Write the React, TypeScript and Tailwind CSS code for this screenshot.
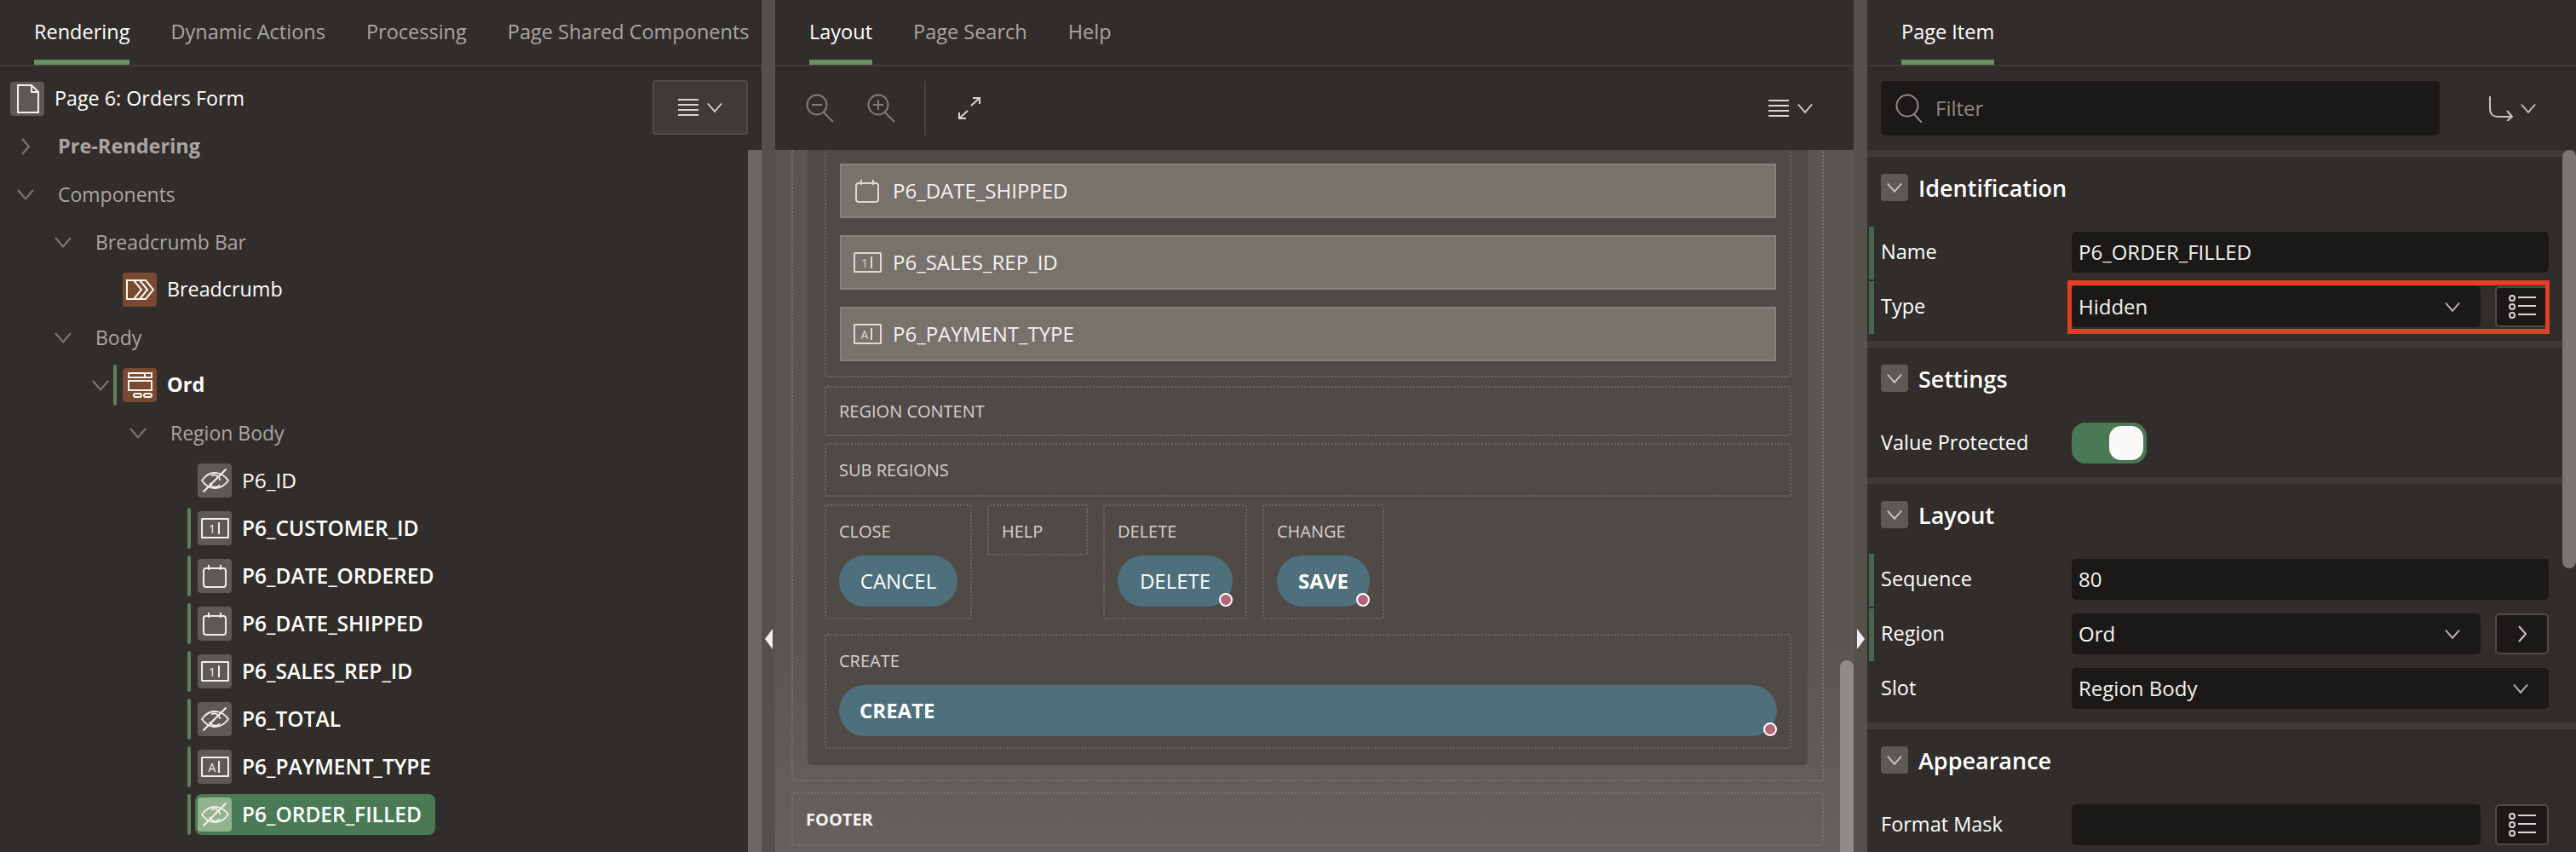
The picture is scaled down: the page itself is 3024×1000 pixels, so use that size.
import React from "react";

const font = { fontFamily: '"Open Sans", "Noto Sans", sans-serif' };

function Chevron({ dir = "down", className = "" }: { dir?: "down" | "right"; className?: string }) {
  return (
    <svg viewBox="0 0 20 20" className={className} fill="none" stroke="currentColor" strokeWidth="2">
      {dir === "down" ? <path d="M1 5 L10 15.5 L19 5" /> : <path d="M6 1 L14 10 L6 19" />}
    </svg>
  );
}

function EyeOff() {
  return (
    <svg viewBox="0 0 40 40" className="w-10 h-10" fill="none" stroke="currentColor" strokeWidth="1.8">
      <path d="M5 20 C10 13 16 11 20 11 C25 11 31 13 36 20 C31 27 25 29 20 29 C16 29 10 27 5 20 Z" />
      <path d="M26 20 a6.5 6.5 0 0 0 -10 -5.5 M14.5 23 a6.5 6.5 0 0 0 11.5 2" />
      <path d="M33.5 6.5 L6.5 33.5" strokeWidth="2.2" />
    </svg>
  );
}

function FieldIcon({ glyph }: { glyph: string }) {
  return (
    <svg viewBox="0 0 40 40" className="w-10 h-10" fill="none" stroke="currentColor" strokeWidth="2">
      <rect x="5" y="9" width="31" height="22" rx="0.5" />
      <text x="17" y="25.5" textAnchor="middle" fontSize="14" fontFamily="Open Sans, sans-serif" fill="currentColor" stroke="none">
        {glyph}
      </text>
      <path d="M25 13 V27" />
    </svg>
  );
}

function CalendarIcon() {
  return (
    <svg viewBox="0 0 40 40" className="w-10 h-10" fill="none" stroke="currentColor" strokeWidth="2">
      <rect x="7" y="11" width="26" height="22" rx="3" />
      <path d="M13 7 V13 M27 7 V13" />
    </svg>
  );
}

function PageIcon() {
  return (
    <svg viewBox="0 0 40 40" className="w-10 h-10" fill="none" stroke="#f2f0ee" strokeWidth="2">
      <path d="M9 4 H25 L33 12 V36 H9 Z" />
      <path d="M25 4 V12 H33" />
    </svg>
  );
}

function BreadcrumbIcon() {
  return (
    <svg viewBox="0 0 40 40" className="w-10 h-10" fill="none" stroke="#fdf6ee" strokeWidth="2">
      <path d="M5 9 H27 L36 20 L27 31 H5 Z" />
      <path d="M13 9 L22 20 L13 31 M20 9 L29 20 L20 31" />
    </svg>
  );
}

function RegionIcon() {
  return (
    <svg viewBox="0 0 40 40" className="w-10 h-10" fill="none" stroke="#fdf6ee" strokeWidth="2">
      <rect x="7" y="6" width="27" height="5" />
      <path d="M26 6 V11" />
      <rect x="7" y="15" width="27" height="11" />
      <rect x="13" y="30" width="9" height="4" rx="2" />
      <rect x="25" y="30" width="9" height="4" rx="2" />
    </svg>
  );
}

function MenuLines({ className = "" }: { className?: string }) {
  return (
    <svg viewBox="0 0 24 20" className={className} fill="none" stroke="currentColor" strokeWidth="2">
      <path d="M0 1 H24 M0 7 H24 M0 13 H24 M0 19 H24" />
    </svg>
  );
}

function OptionsIcon() {
  return (
    <svg viewBox="0 0 32 28" className="w-8 h-7" fill="none" stroke="#d8d5d1" strokeWidth="2">
      <circle cx="4" cy="4" r="3" />
      <circle cx="4" cy="14" r="3" />
      <circle cx="4" cy="24" r="3" />
      <path d="M11 3 H32 M11 13 H32 M11 23 H32" />
    </svg>
  );
}

function Magnifier({ sign }: { sign: "minus" | "plus" }) {
  return (
    <svg viewBox="0 0 34 34" className="w-[34px] h-[34px]" fill="none" stroke="#807c77" strokeWidth="2">
      <circle cx="13" cy="13" r="11.5" />
      <path d="M21 22 L32 33" />
      {sign === "minus" ? <path d="M7 13 H19" /> : <path d="M7 13 H19 M13 7 V19" />}
    </svg>
  );
}

function Tab({ label, active = false }: { label: string; active?: boolean }) {
  return (
    <div className={`relative h-full flex items-center whitespace-nowrap ${active ? "text-white" : "text-[#a9a6a2]"}`}>
      <span>{label}</span>
      {active && <div className="absolute left-0 right-0 bottom-0 h-[6px] bg-[#6b9062]" />}
    </div>
  );
}

function TabBar({ children, className = "" }: { children: React.ReactNode; className?: string }) {
  return (
    <div className={`h-[78px] shrink-0 flex gap-12 border-b-2 border-[#3e3b37] text-[23.5px] ${className}`}>{children}</div>
  );
}

function TreeBranch({ label, dir = "down", pad, bold = false }: { label: string; dir?: "down" | "right"; pad: string; bold?: boolean }) {
  return (
    <div className={`h-14 flex items-center ${pad}`}>
      <Chevron dir={dir} className="w-5 h-5 text-[#7c7873]" />
      <span className={`ml-7 text-[#a9a6a2] ${bold ? "font-bold text-[23.5px]" : "text-[23px]"}`}>{label}</span>
    </div>
  );
}

function TreeLeaf({ label, icon, bar = true, selected = false }: { label: string; icon: React.ReactNode; bar?: boolean; selected?: boolean }) {
  return (
    <div className="h-14 flex items-center pl-[220px]">
      <div className={`w-1 h-12 rounded-sm ${bar ? "bg-[#5f7f58]" : ""}`} />
      <div className={`ml-[5px] h-12 flex items-center pl-[3px] pr-4 rounded-lg ${selected ? "bg-[#4a7a55]" : ""}`}>
        <div className={`w-10 h-10 rounded-[4px] flex items-center justify-center text-[#f1efed] ${selected ? "bg-[#93b28e]" : "bg-[#5d5955]"}`}>
          {icon}
        </div>
        <span className={`ml-3 text-white ${bar ? "font-semibold" : "font-normal"}`}>{label}</span>
      </div>
    </div>
  );
}

function LeftPanel() {
  return (
    <div className="w-[894px] shrink-0 flex flex-col">
      <TabBar className="pl-10">
        <Tab label="Rendering" active />
        <Tab label="Dynamic Actions" />
        <Tab label="Processing" />
        <Tab label="Page Shared Components" />
      </TabBar>
      <div className="flex-1 flex min-h-0">
        <div className="flex-1 pt-[10px] text-[24.5px]">
          <div className="h-14 flex items-center pl-3">
            <div className="w-10 h-10 rounded-[4px] bg-[#5d5955] flex items-center justify-center"><PageIcon /></div>
            <span className="ml-3 text-white font-medium text-[23.3px]">Page 6: Orders Form</span>
          </div>
          <TreeBranch label="Pre-Rendering" dir="right" pad="pl-5" bold />
          <TreeBranch label="Components" pad="pl-5" />
          <TreeBranch label="Breadcrumb Bar" pad="pl-16" />
          <div className="h-14 flex items-center pl-36">
            <div className="w-10 h-10 rounded-[4px] bg-[#774a31] flex items-center justify-center"><BreadcrumbIcon /></div>
            <span className="ml-3 text-white font-medium text-[23.3px]">Breadcrumb</span>
          </div>
          <TreeBranch label="Body" pad="pl-16" />
          <div className="h-14 flex items-center pl-[108px]">
            <Chevron className="w-5 h-5 text-[#7c7873]" />
            <div className="ml-[5px] w-1 h-12 rounded-sm bg-[#5f7f58]" />
            <div className="ml-[7px] w-10 h-10 rounded-[4px] bg-[#774a31] flex items-center justify-center"><RegionIcon /></div>
            <span className="ml-3 text-white font-bold text-[23.5px]">Ord</span>
          </div>
          <TreeBranch label="Region Body" pad="pl-[152px]" />
          <TreeLeaf label="P6_ID" icon={<EyeOff />} bar={false} />
          <TreeLeaf label="P6_CUSTOMER_ID" icon={<FieldIcon glyph="1" />} />
          <TreeLeaf label="P6_DATE_ORDERED" icon={<CalendarIcon />} />
          <TreeLeaf label="P6_DATE_SHIPPED" icon={<CalendarIcon />} />
          <TreeLeaf label="P6_SALES_REP_ID" icon={<FieldIcon glyph="1" />} />
          <TreeLeaf label="P6_TOTAL" icon={<EyeOff />} />
          <TreeLeaf label="P6_PAYMENT_TYPE" icon={<FieldIcon glyph="A" />} />
          <TreeLeaf label="P6_ORDER_FILLED" icon={<EyeOff />} selected />
        </div>
        <div className="w-[112px] shrink-0 mt-4">
          <div className="h-16 rounded-[4px] bg-[#3e3b37] border-2 border-[#4f4b47] flex items-center justify-center gap-[10px] text-[#d8d5d1]">
            <MenuLines className="w-6 h-5" />
            <Chevron className="w-[18px] h-[18px]" />
          </div>
        </div>
        <div className="w-4 shrink-0 mt-[98px] bg-[#6b6763]" />
      </div>
    </div>
  );
}

function Splitter({ dir }: { dir: "left" | "right" }) {
  return (
    <div className="w-[16px] shrink-0 bg-[#55504c] flex items-start justify-center pt-[738px]">
      <div
        className={`w-0 h-0 border-y-[12px] border-y-transparent ${dir === "left" ? "border-r-[9px] border-r-[#f2f0ee]" : "border-l-[9px] border-l-[#f2f0ee]"}`}
      />
    </div>
  );
}

function SlotBox({ children, className = "" }: { children?: React.ReactNode; className?: string }) {
  return (
    <div className={`border-2 border-dotted border-[#6c6762] rounded-[3px] text-[20px] text-[#d6d2ce] ${className}`}>{children}</div>
  );
}

function PageButton({ label, dot = false, bold = false, className = "" }: { label: string; dot?: boolean; bold?: boolean; className?: string }) {
  return (
    <div className={`relative h-[60px] rounded-[30px] bg-[#4d707c] flex items-center text-white text-[24px] ${bold ? "font-bold" : ""} ${className}`}>
      {label}
      {dot && <div className="absolute right-0 bottom-0 w-4 h-4 rounded-full bg-[#b5657a] border-2 border-white" />}
    </div>
  );
}

function ItemBar({ label, icon }: { label: string; icon: React.ReactNode }) {
  return (
    <div className="h-16 bg-[#77726c] border-2 border-[#85817c] flex items-center pl-[10px] gap-[10px] text-[24px] text-[#f4f2f0]">
      <span className="text-[#dcd9d5] flex">{icon}</span>
      {label}
    </div>
  );
}

function CenterPanel() {
  return (
    <div className="w-[1266px] shrink-0 flex flex-col relative">
      <TabBar className="pl-10">
        <Tab label="Layout" active />
        <Tab label="Page Search" />
        <Tab label="Help" />
      </TabBar>
      <div className="h-[98px] shrink-0 flex items-center pl-[36px] pr-[48px]">
        <Magnifier sign="minus" />
        <div className="ml-[38px]"><Magnifier sign="plus" /></div>
        <div className="ml-[33px] w-[2px] h-16 bg-[#45423e]" />
        <svg viewBox="0 0 28 28" className="ml-[37px] w-7 h-7" fill="none" stroke="#d8d5d1" strokeWidth="2">
          <path d="M16 11 L26 2 M18 2 H26 V9 M12 17 L2 26 M10 26 H2 V19" />
        </svg>
        <div className="ml-auto flex items-center gap-[10px] text-[#d8d5d1]">
          <MenuLines className="w-6 h-5" />
          <Chevron className="w-[18px] h-[18px]" />
        </div>
      </div>
      <div className="flex-1 min-h-0 overflow-hidden pl-[19px] pr-[35px] bg-linear-to-b from-[#5a5550] from-[70%] to-[#66615c]">
        <div className="h-[741px] px-[17px] border-2 border-t-0 border-dotted border-[#78736e] rounded-b-[3px]">
          <div className="h-[722px] bg-[#4f4a46] rounded-b-md pl-5 pr-[19px]">
            <SlotBox className="h-[267px] border-t-0 px-4 pt-4 flex flex-col gap-5">
              <ItemBar label="P6_DATE_SHIPPED" icon={<CalendarIcon />} />
              <ItemBar label="P6_SALES_REP_ID" icon={<FieldIcon glyph="1" />} />
              <ItemBar label="P6_PAYMENT_TYPE" icon={<FieldIcon glyph="A" />} />
            </SlotBox>
            <SlotBox className="mt-[10px] h-[59px] pl-[15px] flex items-center">REGION CONTENT</SlotBox>
            <SlotBox className="mt-2 h-[63px] pl-[15px] flex items-center">SUB REGIONS</SlotBox>
            <div className="mt-[9px] flex items-start gap-[18px]">
              <SlotBox className="w-[173px] h-[135px] px-[15px] pt-5">
                <div className="h-[38px]">CLOSE</div>
                <PageButton label="CANCEL" className="w-[139px] justify-center font-medium" />
              </SlotBox>
              <SlotBox className="w-[118px] h-[60px] px-[15px] pt-5">HELP</SlotBox>
              <SlotBox className="w-[169px] h-[135px] px-[15px] pt-5">
                <div className="h-[38px]">DELETE</div>
                <PageButton label="DELETE" dot className="w-[135px] justify-center font-medium" />
              </SlotBox>
              <SlotBox className="w-[143px] h-[135px] px-[15px] pt-5">
                <div className="h-[38px]">CHANGE</div>
                <PageButton label="SAVE" dot bold className="w-[109px] justify-center" />
              </SlotBox>
            </div>
            <SlotBox className="mt-[17px] h-[135px] px-[15px] pt-5">
              <div className="h-[38px]">CREATE</div>
              <PageButton label="CREATE" dot bold className="pl-6" />
            </SlotBox>
          </div>
        </div>
        <div className="mt-[13px] h-[63px] pl-[15px] flex items-center border-2 border-dotted border-[#78736e] rounded-[3px] text-[20px] font-bold text-[#f4f2f0]">
          FOOTER
        </div>
      </div>
      <div className="absolute right-0 top-[775px] bottom-0 w-[16px] rounded-t-lg bg-[#8f8b87]" />
    </div>
  );
}

function SectionHeader({ title }: { title: string }) {
  return (
    <div className="h-8 flex items-center pl-4">
      <div className="w-8 h-8 rounded-[4px] bg-[#5d5955] flex items-center justify-center text-[#cfccc8]">
        <Chevron className="w-[18px] h-[18px]" />
      </div>
      <span className="ml-3 text-[27px] font-semibold text-white">{title}</span>
    </div>
  );
}

function PropRow({ label, bar = false, children }: { label: string; bar?: boolean; children: React.ReactNode }) {
  return (
    <div className="h-[62px] flex ml-[2px]">
      <div className={`w-[6px] shrink-0 ${bar ? "bg-[#45664c]" : ""}`} />
      <div className="flex-1 flex items-center pb-[2px] pr-8">
        <span className="w-[232px] pl-2 shrink-0 text-[23.5px] text-white">{label}</span>
        <div className="flex-1 flex gap-[17px] relative">{children}</div>
      </div>
    </div>
  );
}

function Field({ value = "", chevron = false }: { value?: string; chevron?: boolean }) {
  return (
    <div className="h-12 flex-1 rounded-[5px] bg-[#1a1917] flex items-center pl-2 pr-6 text-[24px] text-[#f4f2f0]">
      <span>{value}</span>
      {chevron && <Chevron className="w-[18px] h-[18px] ml-auto text-[#c2bfbb]" />}
    </div>
  );
}

function SquareButton({ children }: { children: React.ReactNode }) {
  return (
    <div className="w-[63px] h-12 shrink-0 rounded-[5px] bg-[#1a1917] border-2 border-[#4f4b47] flex items-center justify-center text-[#c9c6c2]">
      {children}
    </div>
  );
}

function RightPanel() {
  return (
    <div className="flex-1 min-w-0 flex flex-col relative">
      <TabBar className="pl-10">
        <Tab label="Page Item" active />
      </TabBar>
      <div className="h-[98px] shrink-0 flex items-center pl-4 pr-[47px]">
        <div className="w-[656px] h-16 rounded-[5px] bg-[#1a1917] flex items-center pl-4 text-[24px] text-[#8d8985]">
          <svg viewBox="0 0 34 34" className="w-[34px] h-[34px]" fill="none" stroke="#8d8985" strokeWidth="2">
            <circle cx="15" cy="14" r="12.5" />
            <path d="M23 24 L32 34" />
          </svg>
          <span className="ml-[14px]">Filter</span>
        </div>
        <div className="ml-auto flex items-center gap-2 text-[#c9c6c2]">
          <svg viewBox="0 0 30 30" className="w-[30px] h-[30px]" fill="none" stroke="currentColor" strokeWidth="2">
            <path d="M2 1 V15 C2 22 6 25 11 25 H28 M22 18 L28 25 L22 30" />
          </svg>
          <Chevron className="w-[18px] h-[18px]" />
        </div>
      </div>
      <div className="flex-1 min-h-0 overflow-hidden">
        <section className="pb-2">
          <div className="h-2 bg-[#3e3b37]" />
          <div className="pt-5 pb-[30px]"><SectionHeader title="Identification" /></div>
          <div className="flex flex-col gap-0.5">
            <PropRow label="Name" bar><Field value="P6_ORDER_FILLED" /></PropRow>
            <PropRow label="Type" bar>
              <Field value="Hidden" chevron />
              <SquareButton><OptionsIcon /></SquareButton>
              <div className="absolute -left-[5px] -right-[1px] -top-[7px] -bottom-[8px] border-[5px] border-y-[6px] border-[#e63e26]" />
            </PropRow>
          </div>
        </section>
        <section className="pb-2">
          <div className="h-2 bg-[#3e3b37]" />
          <div className="pt-5 pb-[30px]"><SectionHeader title="Settings" /></div>
          <PropRow label="Value Protected">
            <div className="w-[88px] h-12 rounded-2xl bg-[#4a7a55] flex items-center justify-end pr-1">
              <div className="w-10 h-10 rounded-[14px] bg-[#fbfaf8]" />
            </div>
          </PropRow>
        </section>
        <section className="pb-2">
          <div className="h-2 bg-[#3e3b37]" />
          <div className="pt-5 pb-[30px]"><SectionHeader title="Layout" /></div>
          <div className="flex flex-col gap-0.5">
            <PropRow label="Sequence" bar><Field value="80" /></PropRow>
            <PropRow label="Region" bar>
              <Field value="Ord" chevron />
              <SquareButton><Chevron dir="right" className="w-5 h-5" /></SquareButton>
            </PropRow>
            <PropRow label="Slot"><Field value="Region Body" chevron /></PropRow>
          </div>
        </section>
        <section>
          <div className="h-2 bg-[#3e3b37]" />
          <div className="pt-5 pb-[30px]"><SectionHeader title="Appearance" /></div>
          <PropRow label="Format Mask">
            <Field />
            <SquareButton><OptionsIcon /></SquareButton>
          </PropRow>
        </section>
      </div>
      <div className="absolute right-0 top-[176px] h-[491px] w-4 rounded-lg bg-[#7a7672]" />
    </div>
  );
}

export default function App() {
  return (
    <div style={font} className="w-[3024px] h-[1000px] overflow-hidden flex bg-[#312d2a] leading-none">
      <LeftPanel />
      <Splitter dir="left" />
      <CenterPanel />
      <Splitter dir="right" />
      <RightPanel />
    </div>
  );
}
